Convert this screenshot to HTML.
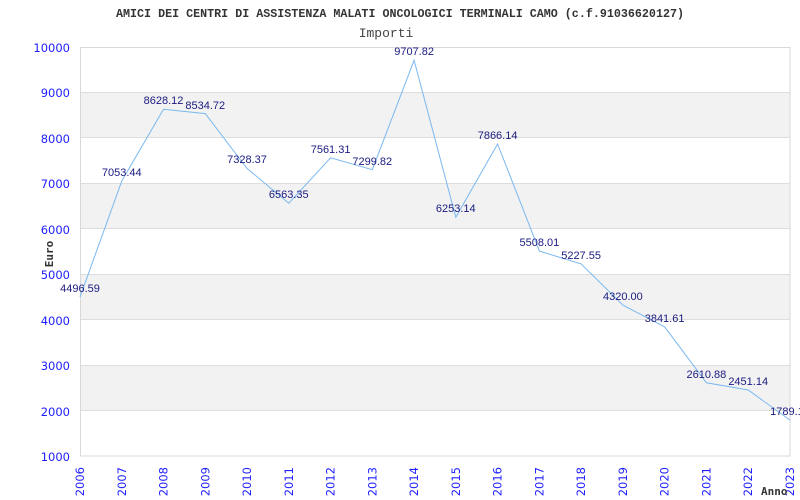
<!DOCTYPE html>
<html><head><meta charset="utf-8"><style>html,body{margin:0;padding:0;background:#fff;}svg{display:block}</style></head>
<body>
<svg width="800" height="500" xmlns="http://www.w3.org/2000/svg">
<rect width="800" height="500" fill="#fff"/>
<text x="400" y="17" text-anchor="middle" font-family="Liberation Mono, monospace" font-weight="bold" font-size="12" fill="#333" textLength="568" lengthAdjust="spacingAndGlyphs">AMICI DEI CENTRI DI ASSISTENZA MALATI ONCOLOGICI TERMINALI CAMO (c.f.91036620127)</text>
<text x="386" y="37" text-anchor="middle" font-family="Liberation Mono, monospace" font-size="13" fill="#444">Importi</text>
<g fill="#f2f2f2">
<rect x="80" y="92.4" width="710" height="45.4"/>
<rect x="80" y="183.3" width="710" height="45.4"/>
<rect x="80" y="274.2" width="710" height="45.4"/>
<rect x="80" y="365.1" width="710" height="45.4"/>
</g>
<g stroke="#ddd" stroke-width="1">
<line x1="80" y1="92.5" x2="790" y2="92.5"/><line x1="80" y1="137.5" x2="790" y2="137.5"/>
<line x1="80" y1="183.5" x2="790" y2="183.5"/><line x1="80" y1="228.5" x2="790" y2="228.5"/>
<line x1="80" y1="274.5" x2="790" y2="274.5"/><line x1="80" y1="319.5" x2="790" y2="319.5"/>
<line x1="80" y1="365.5" x2="790" y2="365.5"/><line x1="80" y1="410.5" x2="790" y2="410.5"/>
</g>
<rect x="80.5" y="47.5" width="709.5" height="408.5" fill="none" stroke="#d8d8d8"/>
<polyline fill="none" stroke="#7ab8f0" stroke-width="1" points="80,297.1 121.8,180.9 163.5,109.3 205.3,113.6 247,168.4 288.8,203.2 330.6,157.8 372.3,169.7 414.1,60.3 455.8,217.3 497.6,144 539.4,251.1 581.1,263.9 622.9,305.1 664.6,326.8 706.4,382.8 748.2,390 790,420.1"/>
<g font-family="Liberation Sans, sans-serif" font-size="11" fill="#1a1a80" text-anchor="middle">
<text x="80" y="292">4496.59</text>
<text x="121.8" y="176">7053.44</text>
<text x="163.5" y="104">8628.12</text>
<text x="205.3" y="109">8534.72</text>
<text x="247" y="163">7328.37</text>
<text x="288.8" y="198">6563.35</text>
<text x="330.6" y="153">7561.31</text>
<text x="372.3" y="165">7299.82</text>
<text x="414.1" y="55">9707.82</text>
<text x="455.8" y="212">6253.14</text>
<text x="497.6" y="139">7866.14</text>
<text x="539.4" y="246">5508.01</text>
<text x="581.1" y="259">5227.55</text>
<text x="622.9" y="300">4320.00</text>
<text x="664.6" y="322">3841.61</text>
<text x="706.4" y="378">2610.88</text>
<text x="748.2" y="385">2451.14</text>
<text x="790" y="415">1789.10</text>
</g>
<g font-family="DejaVu Sans, sans-serif" font-size="11.5" fill="#2020ff" text-anchor="end">
<text x="70" y="52">10000</text><text x="70" y="97">9000</text><text x="70" y="143">8000</text>
<text x="70" y="188">7000</text><text x="70" y="234">6000</text><text x="70" y="279">5000</text>
<text x="70" y="325">4000</text><text x="70" y="370">3000</text><text x="70" y="416">2000</text>
<text x="70" y="461">1000</text>
</g>
<g font-family="DejaVu Sans, sans-serif" font-size="11.5" fill="#2020ff" text-anchor="end">
<text transform="translate(84,467) rotate(-90)">2006</text>
<text transform="translate(125.8,467) rotate(-90)">2007</text>
<text transform="translate(167.5,467) rotate(-90)">2008</text>
<text transform="translate(209.3,467) rotate(-90)">2009</text>
<text transform="translate(251,467) rotate(-90)">2010</text>
<text transform="translate(292.8,467) rotate(-90)">2011</text>
<text transform="translate(334.6,467) rotate(-90)">2012</text>
<text transform="translate(376.3,467) rotate(-90)">2013</text>
<text transform="translate(418.1,467) rotate(-90)">2014</text>
<text transform="translate(459.8,467) rotate(-90)">2015</text>
<text transform="translate(501.6,467) rotate(-90)">2016</text>
<text transform="translate(543.4,467) rotate(-90)">2017</text>
<text transform="translate(585.1,467) rotate(-90)">2018</text>
<text transform="translate(626.9,467) rotate(-90)">2019</text>
<text transform="translate(668.6,467) rotate(-90)">2020</text>
<text transform="translate(710.4,467) rotate(-90)">2021</text>
<text transform="translate(752.2,467) rotate(-90)">2022</text>
<text transform="translate(794,467) rotate(-90)">2023</text>
</g>
<text transform="translate(53,254) rotate(-90)" text-anchor="middle" font-family="DejaVu Sans Mono, monospace" font-weight="bold" font-size="11" fill="#333">Euro</text>
<text x="761" y="495" font-family="DejaVu Sans Mono, monospace" font-weight="bold" font-size="11" fill="#333">Anno</text>
</svg>
</body></html>
